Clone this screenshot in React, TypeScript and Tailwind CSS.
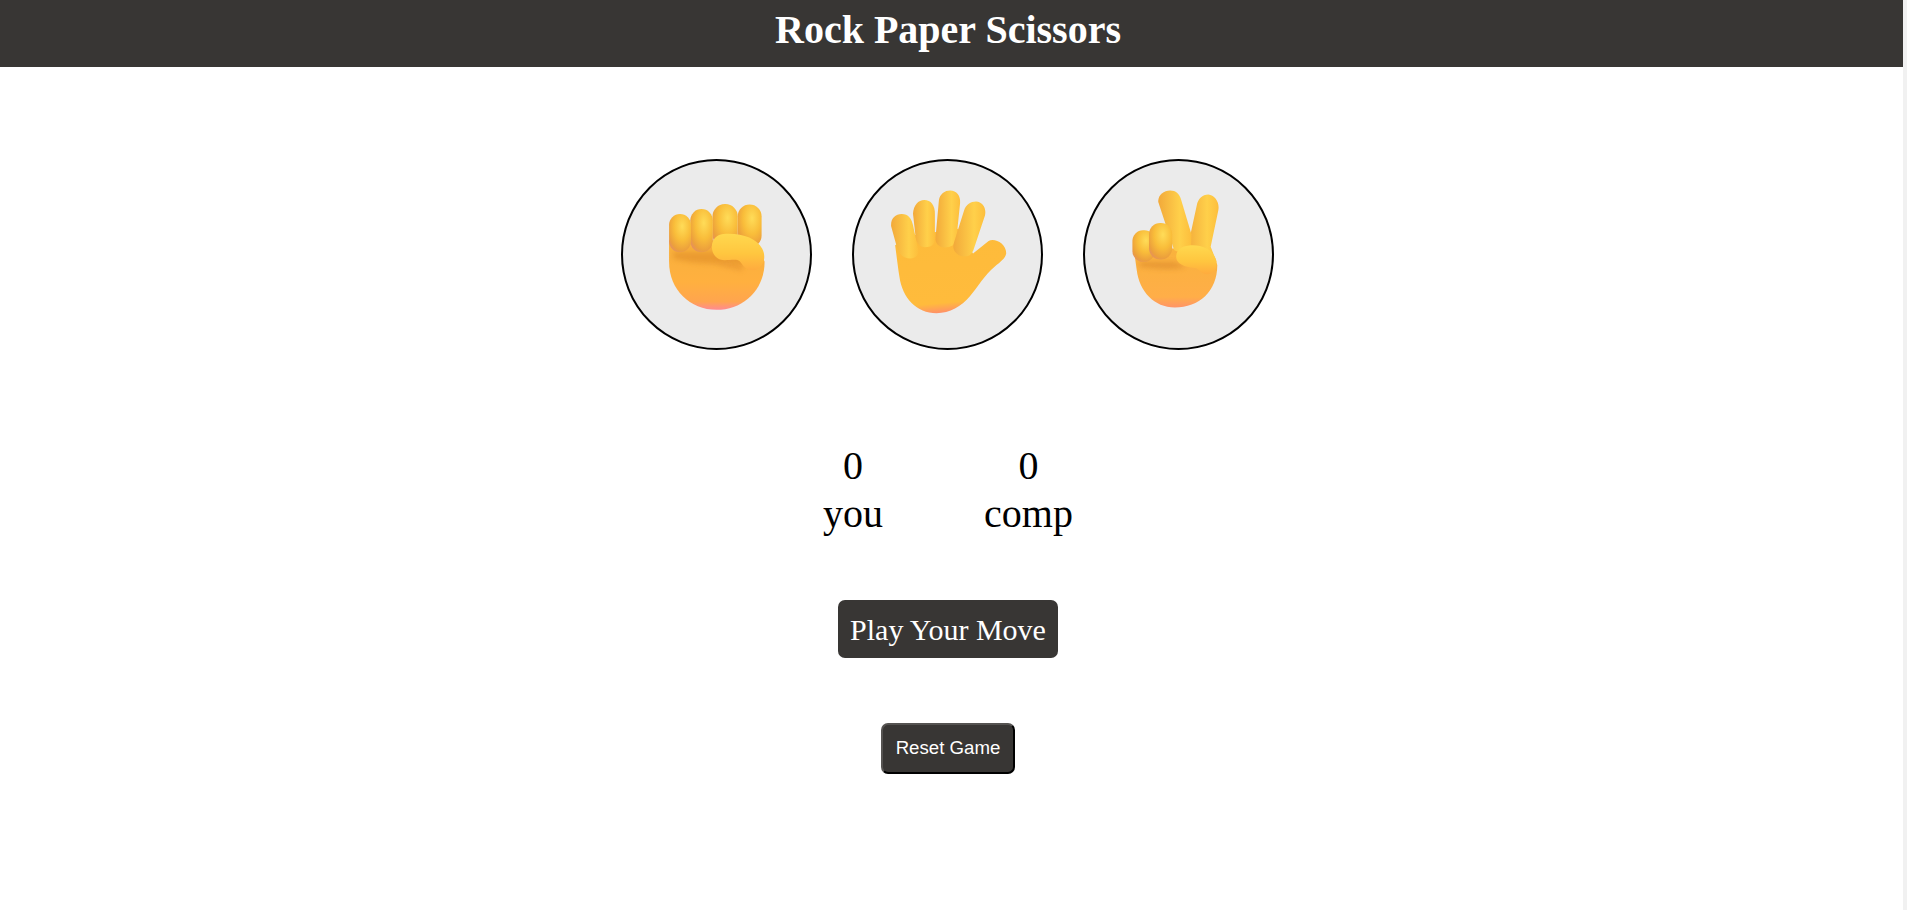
import React, { useState } from 'react';

const Defs = () => (
  <defs>
    <linearGradient id="palm" x1="0" y1="0" x2="0" y2="1">
      <stop offset="0" stopColor="#f7b03c" />
      <stop offset="0.6" stopColor="#ffb03f" />
      <stop offset="0.88" stopColor="#ffa54e" />
      <stop offset="1" stopColor="#ff8a92" />
    </linearGradient>
    <linearGradient id="open" x1="0.3" y1="0" x2="0.42" y2="1">
      <stop offset="0" stopColor="#fdbb3a" />
      <stop offset="0.88" stopColor="#ffbb3c" />
      <stop offset="1" stopColor="#ff8f6a" />
    </linearGradient>
    <linearGradient id="peace" x1="0" y1="0" x2="0" y2="1">
      <stop offset="0" stopColor="#f9b23c" />
      <stop offset="0.82" stopColor="#ffae48" />
      <stop offset="1" stopColor="#ff9468" />
    </linearGradient>
    <radialGradient id="finger" cx="0.6" cy="0.32" r="0.75">
      <stop offset="0" stopColor="#ffdc58" />
      <stop offset="0.5" stopColor="#f9bd3a" />
      <stop offset="0.85" stopColor="#eca03c" />
      <stop offset="1" stopColor="#e6925a" />
    </radialGradient>
    <linearGradient id="thumb" x1="0" y1="0" x2="0" y2="1">
      <stop offset="0" stopColor="#ffd84e" />
      <stop offset="0.55" stopColor="#ffc63f" />
      <stop offset="1" stopColor="#ffab3e" />
    </linearGradient>
    <linearGradient id="longFinger" x1="0" y1="0" x2="1" y2="0">
      <stop offset="0" stopColor="#f2a93a" />
      <stop offset="0.65" stopColor="#ffd04a" />
      <stop offset="1" stopColor="#fdbe3c" />
    </linearGradient>
    <filter id="soft" x="-30%" y="-60%" width="160%" height="220%">
      <feGaussianBlur stdDeviation="8" />
    </filter>
  </defs>
);

const Fist = () => (
  <svg viewBox="38 31 564 564" className="w-full h-full">
    <path d="M177 270 H440 L465 335 C465 420 400 480 320 480 C240 480 177 420 177 335 Z" fill="url(#palm)" />
    <path d="M190 305 H400 L410 345 C350 335 280 350 190 325 Z" fill="#de8a28" opacity="0.55" filter="url(#soft)" />
    <rect x="384" y="162" width="72" height="130" rx="36" fill="url(#finger)" />
    <rect x="308" y="161" width="76" height="130" rx="37" fill="url(#finger)" />
    <rect x="241" y="176" width="68" height="130" rx="34" fill="url(#finger)" />
    <rect x="177" y="191" width="66" height="115" rx="33" fill="url(#finger)" />
    <path d="M312 330 C340 345 380 335 400 350 L395 362 L330 345 Z" fill="#e08a2c" opacity="0.5" filter="url(#soft)" />
    <path d="M340 251 C395 247 440 262 458 296 C470 320 464 345 442 358 C420 366 404 354 394 338 C385 325 370 330 345 330 C320 330 306 312 306 290 C306 268 320 253 340 251 Z" fill="url(#thumb)" />
  </svg>
);

const Paper = () => (
  <svg viewBox="26 31 564 564" className="w-full h-full">
    <path d="M150 285 L205 255 L340 235 L385 310 L432 272 C450 262 486 280 485 310 C482 325 470 333 450 350 C420 375 400 410 375 440 C350 470 315 490 275 490 C215 490 172 445 163 380 C158 350 155 320 150 285 Z" fill="url(#open)" />
    <path d="M138 228 C136 205 150 191 170 191 C190 191 200 205 204 225 L220 300 C222 322 200 330 180 322 C165 315 160 305 155 290 Z" fill="url(#longFinger)" />
    <path d="M204 190 C205 165 220 149 238 149 C258 149 270 165 270 190 V265 C270 285 258 291 240 291 C225 291 215 280 212 262 Z" fill="url(#longFinger)" />
    <path d="M282 150 C285 130 300 120 316 120 C335 120 348 135 346 158 L335 265 C332 285 318 292 300 292 C282 292 270 280 272 262 Z" fill="url(#longFinger)" />
    <path d="M358 180 C364 162 378 153 394 153 C414 155 426 172 421 195 L386 300 C378 320 360 323 342 315 C326 306 322 292 328 275 Z" fill="url(#longFinger)" />
  </svg>
);

const Scissors = () => (
  <svg viewBox="31 31 564 564" className="w-full h-full">
    <path d="M178 295 H410 L430 345 C430 425 375 473 302 473 C240 473 195 425 187 360 Z" fill="url(#peace)" />
    <path d="M195 335 H300 L335 350 C300 362 240 355 195 350 Z" fill="#d9852a" opacity="0.55" filter="url(#soft)" />
    <path d="M368 165 C372 145 385 132 403 132 C422 134 438 155 433 180 L410 290 L428 335 L335 320 L350 248 Z" fill="url(#longFinger)" />
    <path d="M252 155 C250 135 268 120 288 120 C305 120 315 130 320 145 L352 252 L350 320 L300 300 Z" fill="url(#longFinger)" />
    <rect x="174" y="240" width="68" height="95" rx="32" fill="url(#finger)" />
    <rect x="224" y="218" width="70" height="110" rx="34" fill="url(#finger)" />
    <path d="M345 286 C385 282 415 300 425 325 C432 345 428 365 405 372 C385 375 378 360 365 354 C340 352 305 345 306 318 C307 300 322 288 345 286 Z" fill="url(#thumb)" />
  </svg>
);

const MoveChoice: React.FC<{ children: React.ReactNode; onPick: () => void }> = ({ children, onPick }) => (
  <div
    onClick={onPick}
    className="w-[191px] h-[191px] rounded-full border-2 border-black bg-[#ebebeb] overflow-hidden cursor-pointer"
  >
    {children}
  </div>
);

const App: React.FC = () => {
  const [you, setYou] = useState(0);
  const [comp, setComp] = useState(0);
  const [message, setMessage] = useState('Play Your Move');

  const play = (move: number) => {
    const other = Math.floor(Math.random() * 3);
    if (move === other) {
      setMessage('Game Draw');
    } else if ((move + 1) % 3 === other) {
      setComp(prev => prev + 1);
      setMessage('You Lost');
    } else {
      setYou(prev => prev + 1);
      setMessage('You Won');
    }
  };

  const reset = () => {
    setYou(0);
    setComp(0);
    setMessage('Play Your Move');
  };

  return (
    <div className="flex h-[910px] overflow-hidden bg-white font-['Liberation_Serif',serif] text-black">
      <svg width="0" height="0" className="absolute">
        <Defs />
      </svg>
      <main className="flex-1 min-w-0">
        <header className="h-[67px] bg-[#383634] pr-[7px] text-center">
          <h1 className="text-[40px] leading-[60px] font-bold text-white">Rock Paper Scissors</h1>
        </header>

        <div className="flex flex-col items-center pr-[7px]">
          <div className="mt-[92px] mr-px flex gap-[40px]">
            <MoveChoice onPick={() => play(0)}><Fist /></MoveChoice>
            <MoveChoice onPick={() => play(1)}><Paper /></MoveChoice>
            <MoveChoice onPick={() => play(2)}><Scissors /></MoveChoice>
          </div>

          <div className="mt-[90px] flex gap-[101px] text-[40px] leading-[49px] text-center">
            <div>
              <p className="translate-y-px">{you}</p>
              <p>you</p>
            </div>
            <div>
              <p className="translate-y-px">{comp}</p>
              <p>comp</p>
            </div>
          </div>

          <div className="mt-[62px] h-[58px] px-3 flex items-center rounded-[7px] bg-[#383634] text-[30px] text-white">
            {message}
          </div>

          <button
            onClick={reset}
            className="mt-[65px] w-[134px] h-[51px] pb-[2px] rounded-[7px] border-2 border-t-[#555351] border-l-[#555351] border-r-black border-b-black bg-[#383634] font-['Liberation_Sans',sans-serif] text-[18.67px] text-white"
          >
            Reset Game
          </button>
        </div>
      </main>
      <aside className="w-[4px] bg-[#f1f1f1]" />
    </div>
  );
};

export default App;
